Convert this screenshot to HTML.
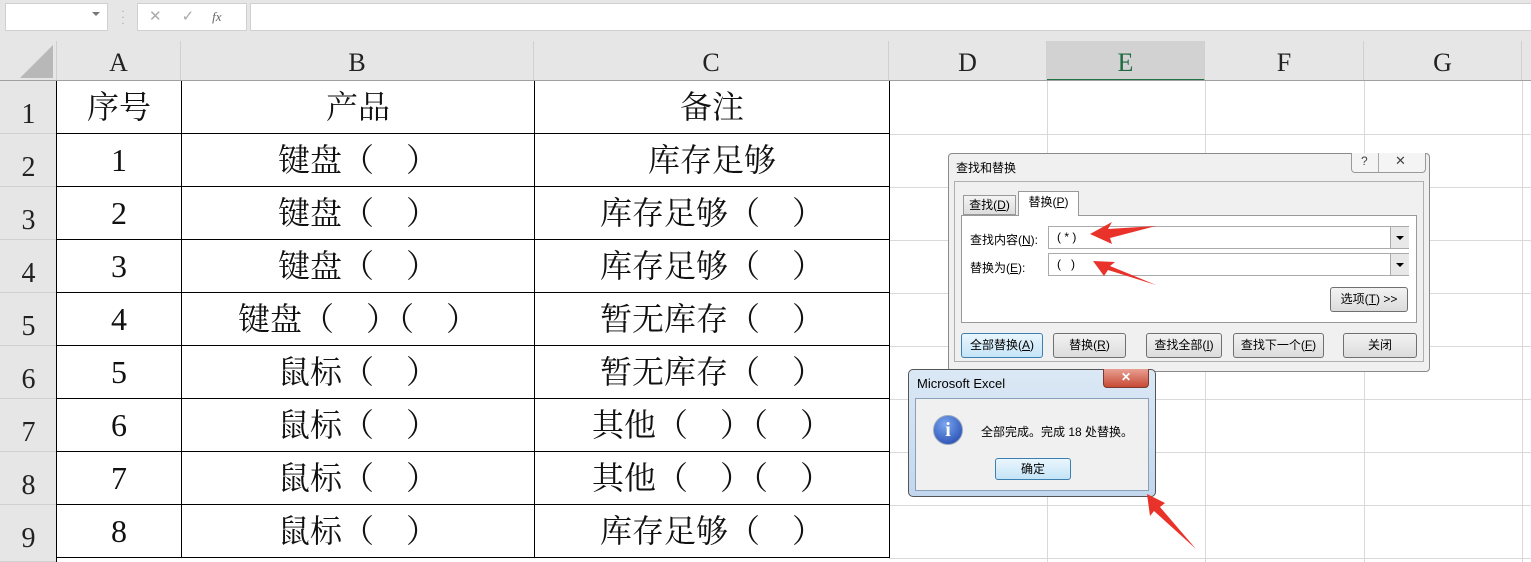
<!DOCTYPE html>
<html><head><meta charset="utf-8"><style>
body{margin:0;width:1531px;height:562px;overflow:hidden;background:#fff;position:relative;font-family:"Liberation Serif","Noto Serif CJK SC",serif}
.a{position:absolute}
.hd{position:absolute;top:41px;height:40px;background:#e6e6e6;border-right:1px solid #d0d0d0;text-align:center;font-size:26px;line-height:44px;color:#222;box-sizing:border-box}
.rh{position:absolute;left:0;width:57px;background:#e6e6e6;border-bottom:1px solid #d0d0d0;box-sizing:border-box;font-size:28px;color:#222;text-align:center;padding-top:18px}
.c{position:absolute;height:53px;line-height:53px;text-align:center;font-size:32px;color:#111;box-sizing:border-box;border-right:1px solid #000;border-bottom:1px solid #000}
.g{position:absolute;background:#d9d9d9}
.ui{font-family:"Liberation Sans","Noto Sans CJK SC",sans-serif;font-size:12px;color:#000}
.btn{position:absolute;border:1px solid #707070;border-radius:3px;background:linear-gradient(#f2f2f2,#dcdcdc);text-align:center;line-height:22px;box-sizing:border-box}
</style></head><body>
<div class="a" style="left:0;top:0;width:1531px;height:41px;background:#e6e6e6"></div>
<div class="a" style="left:5px;top:3px;width:101px;height:26px;background:#fff;border:1px solid #d0d0d0"></div>
<div class="a" style="left:92px;top:12px;width:0;height:0;border-left:4px solid transparent;border-right:4px solid transparent;border-top:4px solid #777"></div>
<div class="a" style="left:121px;top:8px;color:#aaa;font-size:12px;line-height:6px">·<br>·<br>·</div>
<div class="a" style="left:137px;top:3px;width:108px;height:26px;background:#fff;border:1px solid #d0d0d0;color:#aaa;font-family:'Liberation Sans';font-size:15px;line-height:26px"><span style="margin-left:11px">✕</span><span style="margin-left:20px">✓</span><i style="margin-left:18px;font-family:'Liberation Serif';color:#666;font-size:13px">fx</i></div>
<div class="a" style="left:250px;top:3px;width:1290px;height:26px;background:#fff;border:1px solid #d0d0d0"></div>
<div class="a" style="left:0;top:41px;width:57px;height:40px;background:#e6e6e6;border-right:1px solid #d0d0d0;box-sizing:border-box"></div>
<div class="a" style="left:20px;top:45px;width:0;height:0;border-left:33px solid transparent;border-bottom:33px solid #b8b8b8"></div>
<div class="hd" style="left:57px;width:124px">A</div>
<div class="hd" style="left:181px;width:353px">B</div>
<div class="hd" style="left:534px;width:355px">C</div>
<div class="hd" style="left:889px;width:158px">D</div>
<div class="hd" style="left:1047px;width:158px;background:#d2d2d2;color:#1e6b41;border-bottom:2px solid #217346">E</div>
<div class="hd" style="left:1205px;width:159px">F</div>
<div class="hd" style="left:1364px;width:158px">G</div>
<div class="hd" style="left:1522px;width:20px"></div>
<div class="a" style="left:0;top:80px;width:1531px;height:1px;background:#a0a0a0"></div>
<div class="g" style="left:1047px;top:81px;width:1px;height:481px"></div>
<div class="g" style="left:1205px;top:81px;width:1px;height:481px"></div>
<div class="g" style="left:1364px;top:81px;width:1px;height:481px"></div>
<div class="g" style="left:1522px;top:81px;width:1px;height:481px"></div>
<div class="g" style="left:889px;top:134px;width:642px;height:1px"></div>
<div class="g" style="left:889px;top:187px;width:642px;height:1px"></div>
<div class="g" style="left:889px;top:240px;width:642px;height:1px"></div>
<div class="g" style="left:889px;top:293px;width:642px;height:1px"></div>
<div class="g" style="left:889px;top:346px;width:642px;height:1px"></div>
<div class="g" style="left:889px;top:399px;width:642px;height:1px"></div>
<div class="g" style="left:889px;top:452px;width:642px;height:1px"></div>
<div class="g" style="left:889px;top:505px;width:642px;height:1px"></div>
<div class="g" style="left:889px;top:558px;width:642px;height:1px"></div>
<div class="rh" style="top:81px;height:53px">1</div>
<div class="rh" style="top:134px;height:53px">2</div>
<div class="rh" style="top:187px;height:53px">3</div>
<div class="rh" style="top:240px;height:53px">4</div>
<div class="rh" style="top:293px;height:53px">5</div>
<div class="rh" style="top:346px;height:53px">6</div>
<div class="rh" style="top:399px;height:53px">7</div>
<div class="rh" style="top:452px;height:53px">8</div>
<div class="rh" style="top:505px;height:57px">9</div>
<div class="a" style="left:56px;top:81px;width:1px;height:481px;background:#000"></div>
<div class="c" style="left:57px;top:81px;width:125px">序号</div><div class="c" style="left:182px;top:81px;width:353px">产品</div><div class="c" style="left:535px;top:81px;width:355px">备注</div>
<div class="c" style="left:57px;top:134px;width:125px">1</div><div class="c" style="left:182px;top:134px;width:353px">键盘（　）</div><div class="c" style="left:535px;top:134px;width:355px">库存足够</div>
<div class="c" style="left:57px;top:187px;width:125px">2</div><div class="c" style="left:182px;top:187px;width:353px">键盘（　）</div><div class="c" style="left:535px;top:187px;width:355px">库存足够（　）</div>
<div class="c" style="left:57px;top:240px;width:125px">3</div><div class="c" style="left:182px;top:240px;width:353px">键盘（　）</div><div class="c" style="left:535px;top:240px;width:355px">库存足够（　）</div>
<div class="c" style="left:57px;top:293px;width:125px">4</div><div class="c" style="left:182px;top:293px;width:353px">键盘（　）（　）</div><div class="c" style="left:535px;top:293px;width:355px">暂无库存（　）</div>
<div class="c" style="left:57px;top:346px;width:125px">5</div><div class="c" style="left:182px;top:346px;width:353px">鼠标（　）</div><div class="c" style="left:535px;top:346px;width:355px">暂无库存（　）</div>
<div class="c" style="left:57px;top:399px;width:125px">6</div><div class="c" style="left:182px;top:399px;width:353px">鼠标（　）</div><div class="c" style="left:535px;top:399px;width:355px">其他（　）（　）</div>
<div class="c" style="left:57px;top:452px;width:125px">7</div><div class="c" style="left:182px;top:452px;width:353px">鼠标（　）</div><div class="c" style="left:535px;top:452px;width:355px">其他（　）（　）</div>
<div class="c" style="left:57px;top:505px;width:125px">8</div><div class="c" style="left:182px;top:505px;width:353px">鼠标（　）</div><div class="c" style="left:535px;top:505px;width:355px">库存足够（　）</div>

<div class="a ui" style="left:948px;top:153px;width:482px;height:219px;background:#f0f0f0;border:1px solid #8a8a8a;border-radius:4px;box-sizing:border-box">
  <div class="a" style="left:7px;top:5px;font-size:12px">查找和替换</div>
  <div class="a" style="left:402px;top:-1px;width:73px;height:19px;border:1px solid #999;border-top:none;border-radius:0 0 4px 4px;background:#f4f4f4;font-size:12px;color:#444"><span class="a" style="left:9px;top:1px">?</span><span class="a" style="left:26px;top:0;width:1px;height:19px;background:#aaa"></span><span class="a" style="left:43px;top:0px;font-size:13px">✕</span></div>
  <div class="a" style="left:5px;top:27px;width:470px;height:181px;border:1px solid #b0b0b0;box-sizing:border-box;background:#f0f0f0"></div>
  <div class="a" style="left:14px;top:41px;width:53px;height:20px;border:1px solid #999;background:linear-gradient(#f4f4f4,#ddd);box-sizing:border-box;text-align:center;line-height:19px">查找(<u>D</u>)</div>
  <div class="a" style="left:69px;top:37px;width:61px;height:25px;border:1px solid #999;border-bottom:none;background:#fff;box-sizing:border-box;text-align:center;line-height:20px;z-index:2">替换(<u>P</u>)</div>
  <div class="a" style="left:12px;top:61px;width:456px;height:108px;border:1px solid #999;background:#fff;box-sizing:border-box"></div>
  <div class="a" style="left:21px;top:77px">查找内容(<u>N</u>):</div>
  <div class="a" style="left:99px;top:72px;width:361px;height:23px;border:1px solid #aaa;background:#fff;box-sizing:border-box;line-height:21px;padding-left:8px">( * )</div>
  <div class="a" style="left:441px;top:73px;width:18px;height:21px;background:#e8e8e8;border-left:1px solid #aaa"><div class="a" style="left:5px;top:9px;border-left:4px solid transparent;border-right:4px solid transparent;border-top:4px solid #000"></div></div>
  <div class="a" style="left:21px;top:105px">替换为(<u>E</u>):</div>
  <div class="a" style="left:99px;top:99px;width:361px;height:23px;border:1px solid #aaa;background:#fff;box-sizing:border-box;line-height:21px;padding-left:8px">(&nbsp;&nbsp;&nbsp;)</div>
  <div class="a" style="left:441px;top:100px;width:18px;height:21px;background:#e8e8e8;border-left:1px solid #aaa"><div class="a" style="left:5px;top:9px;border-left:4px solid transparent;border-right:4px solid transparent;border-top:4px solid #000"></div></div>
  <div class="btn" style="left:381px;top:133px;width:78px;height:25px">选项(<u>T</u>) &gt;&gt;</div>
  <div class="btn" style="left:12px;top:179px;width:82px;height:25px;border-color:#3c7fb1;background:linear-gradient(#eaf6fd,#c4e4f7)">全部替换(<u>A</u>)</div>
  <div class="btn" style="left:104px;top:179px;width:73px;height:25px">替换(<u>R</u>)</div>
  <div class="btn" style="left:197px;top:179px;width:76px;height:25px">查找全部(<u>I</u>)</div>
  <div class="btn" style="left:284px;top:179px;width:91px;height:25px">查找下一个(<u>F</u>)</div>
  <div class="btn" style="left:394px;top:179px;width:74px;height:25px">关闭</div>
</div>

<div class="a ui" style="left:908px;top:369px;width:248px;height:128px;background:linear-gradient(#dbe8f5,#c2d7ee);border:1px solid #555;border-radius:5px;box-sizing:border-box">
  <div class="a" style="left:8px;top:6px;font-size:13px;color:#000">Microsoft Excel</div>
  <div class="a" style="left:194px;top:-1px;width:44px;height:18px;background:linear-gradient(#e8a093,#c74a34);border:1px solid #7a3a30;border-top:none;border-radius:0 0 4px 4px;color:#fff;text-align:center;font-weight:bold;line-height:16px;font-size:12px">✕</div>
  <div class="a" style="left:6px;top:28px;width:234px;height:93px;background:#f0f0f0;border:1px solid #8aa0b8;box-sizing:border-box"></div>
  <div class="a" style="left:24px;top:45px;width:30px;height:30px;border-radius:50%;background:radial-gradient(circle at 40% 30%,#7aa6f0,#1a3fa8);border:1px solid #9ab;box-sizing:border-box;color:#fff;text-align:center;font:bold 20px/28px 'Liberation Serif'">i</div>
  <div class="a" style="left:72px;top:53px">全部完成。完成 18 处替换。</div>
  <div class="btn" style="left:86px;top:88px;width:76px;height:22px;line-height:20px;border-color:#3c7fb1;background:linear-gradient(#eaf6fd,#c4e4f7)">确定</div>
</div>

<svg class="a" style="left:0;top:0" width="1531" height="562">
<g fill="#e8322a">
<polygon points="1090,234 1112,222 1108,229 1156,226 1110,238 1112,244"/>
<polygon points="1093,261 1115,262 1110,266 1156,285 1108,270 1104,276"/>
<polygon points="1147,494 1165,503 1160,507 1196,549 1154,511 1150,516"/>
</g>
</svg>
</body></html>
